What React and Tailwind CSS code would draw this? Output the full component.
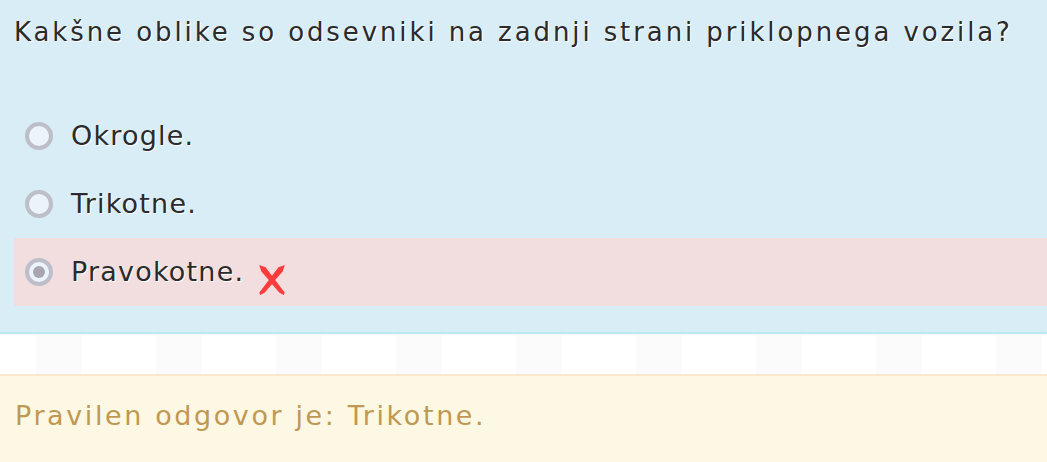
import React from 'react';

const font = { fontFamily: '"DejaVu Sans", Verdana, sans-serif' };

function Radio({ checked }) {
  return (
    <span className="flex h-[28px] w-[28px] shrink-0 items-center justify-center rounded-full border-[4px] border-[#bdbec8] bg-[#ecf4fb]">
      {checked && <span className="h-[12px] w-[12px] rounded-full bg-[#a9a6b2]" />}
    </span>
  );
}

function WrongMark() {
  return (
    <svg width="30" height="32" viewBox="0 0 28 30" className="ml-[13px] mt-[16px]">
      <path d="M2 1 L8 3 L14 11 L20 3 L26 1 L24 7 L17 15 L26 27 L25 29 L21 27 L14 19 L7 27 L3 29 L2 27 L11 15 L4 7 Z" fill="#fb3c3c" />
    </svg>
  );
}

function Option({ label, checked, wrong }) {
  return (
    <div className={`flex h-[68px] items-center pl-[11px] ${wrong ? 'bg-[#f2dede]' : ''}`}>
      <Radio checked={checked} />
      <span className="ml-[18px] text-[27px] tracking-[1.2px] text-[#2b2b2b] [text-shadow:1px_1px_0_#ffffff]">{label}</span>
      {wrong && <WrongMark />}
    </div>
  );
}

export default function App() {
  return (
    <div className="h-[462px] w-[1047px] overflow-hidden bg-white" style={font}>
      <div className="border-b-2 border-[#bce8f1] bg-[#d9edf7] pb-[26px]">
        <div className="whitespace-nowrap px-[14px] pt-[12px] text-[26px] leading-[40px] tracking-[2.9px] text-[#2b2b2b] [text-shadow:1px_1px_0_#ffffff]">
          Kakšne oblike so odsevniki na zadnji strani priklopnega vozila?
        </div>
        <div className="ml-[14px] mt-[50px]">
          <Option label="Okrogle." />
          <Option label="Trikotne." />
          <Option label="Pravokotne." checked wrong />
        </div>
      </div>
      <div className="h-[40px] bg-[repeating-linear-gradient(90deg,#ffffff_0px,#ffffff_36px,#fbfbfb_36px,#fbfbfb_82px,#ffffff_82px,#ffffff_120px)]" />
      <div className="border-t-2 border-[#fbe8cf] bg-[#fcf8e3] px-[15px] pt-[20px] pb-[30px]">
        <span className="text-[27px] leading-[40px] tracking-[2.6px] text-[#c09853]">Pravilen odgovor je: Trikotne.</span>
      </div>
    </div>
  );
}
